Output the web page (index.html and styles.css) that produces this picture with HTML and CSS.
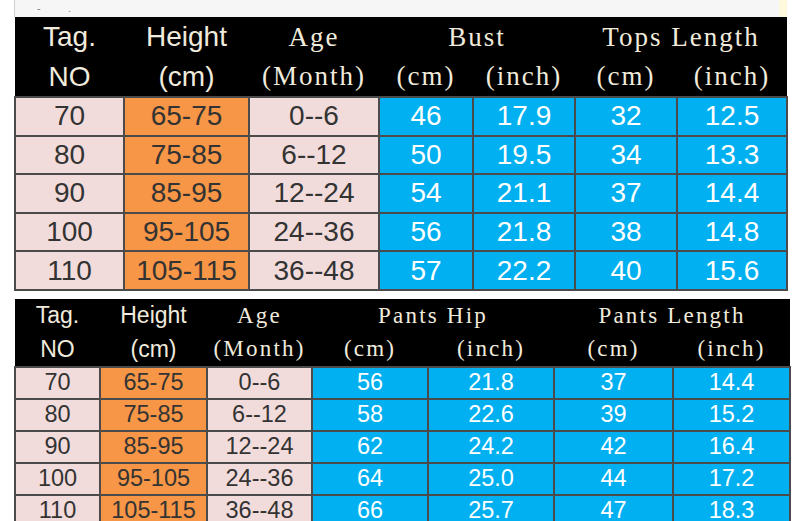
FILE: index.html
```html
<!DOCTYPE html>
<html>
<head>
<meta charset="utf-8">
<link rel="stylesheet" href="styles.css">
</head>
<body>
<div class="topbar">
  <div class="strip"><span class="mark">-&nbsp;&nbsp;&nbsp;&nbsp;&nbsp;.</span></div>
  <div class="yellow"></div>
</div>
<table class="chart chart-top">
  <colgroup>
    <col style="width:109px"><col style="width:125px"><col style="width:130px"><col style="width:94px"><col style="width:102px"><col style="width:102px"><col style="width:110px">
  </colgroup>
  <thead>
    <tr>
      <th class="sans">Tag.</th><th class="sans">Height</th><th class="serif">Age</th><th class="serif" colspan="2">Bust</th><th class="serif" colspan="2">Tops Length</th>
    </tr>
    <tr>
      <th class="sans">NO</th><th class="sans">(cm)</th><th class="serif">(Month)</th><th class="serif">(cm)</th><th class="serif">(inch)</th><th class="serif">(cm)</th><th class="serif">(inch)</th>
    </tr>
  </thead>
  <tbody>
    <tr><td class="pink">70</td><td class="orange">65-75</td><td class="pink">0--6</td><td class="blue">46</td><td class="blue">17.9</td><td class="blue">32</td><td class="blue">12.5</td></tr>
    <tr><td class="pink">80</td><td class="orange">75-85</td><td class="pink">6--12</td><td class="blue">50</td><td class="blue">19.5</td><td class="blue">34</td><td class="blue">13.3</td></tr>
    <tr><td class="pink">90</td><td class="orange">85-95</td><td class="pink">12--24</td><td class="blue">54</td><td class="blue">21.1</td><td class="blue">37</td><td class="blue">14.4</td></tr>
    <tr><td class="pink">100</td><td class="orange">95-105</td><td class="pink">24--36</td><td class="blue">56</td><td class="blue">21.8</td><td class="blue">38</td><td class="blue">14.8</td></tr>
    <tr><td class="pink">110</td><td class="orange">105-115</td><td class="pink">36--48</td><td class="blue">57</td><td class="blue">22.2</td><td class="blue">40</td><td class="blue">15.6</td></tr>
  </tbody>
</table>
<table class="chart chart-bottom">
  <colgroup>
    <col style="width:85px"><col style="width:107px"><col style="width:105px"><col style="width:116px"><col style="width:126px"><col style="width:119px"><col style="width:117px">
  </colgroup>
  <thead>
    <tr>
      <th class="sans">Tag.</th><th class="sans">Height</th><th class="serif">Age</th><th class="serif" colspan="2">Pants Hip</th><th class="serif" colspan="2">Pants Length</th>
    </tr>
    <tr>
      <th class="sans">NO</th><th class="sans">(cm)</th><th class="serif">(Month)</th><th class="serif">(cm)</th><th class="serif">(inch)</th><th class="serif">(cm)</th><th class="serif">(inch)</th>
    </tr>
  </thead>
  <tbody>
    <tr><td class="pink">70</td><td class="orange">65-75</td><td class="pink">0--6</td><td class="blue">56</td><td class="blue">21.8</td><td class="blue">37</td><td class="blue">14.4</td></tr>
    <tr><td class="pink">80</td><td class="orange">75-85</td><td class="pink">6--12</td><td class="blue">58</td><td class="blue">22.6</td><td class="blue">39</td><td class="blue">15.2</td></tr>
    <tr><td class="pink">90</td><td class="orange">85-95</td><td class="pink">12--24</td><td class="blue">62</td><td class="blue">24.2</td><td class="blue">42</td><td class="blue">16.4</td></tr>
    <tr><td class="pink">100</td><td class="orange">95-105</td><td class="pink">24--36</td><td class="blue">64</td><td class="blue">25.0</td><td class="blue">44</td><td class="blue">17.2</td></tr>
    <tr><td class="pink">110</td><td class="orange">105-115</td><td class="pink">36--48</td><td class="blue">66</td><td class="blue">25.7</td><td class="blue">47</td><td class="blue">18.3</td></tr>
  </tbody>
</table>
</body>
</html>
```
FILE: styles.css
```css
html, body {
  margin: 0;
  padding: 0;
  background: #ffffff;
  overflow: hidden;
}
body {
  width: 800px;
  height: 521px;
  font-family: "Liberation Sans", Arial, sans-serif;
}
.topbar {
  height: 17px;
  display: flex;
  padding-left: 14px;
}
.strip {
  flex: 1;
  border-left: 1px solid #cfcfcf;
  background: #f6f6f6;
  position: relative;
}
.mark {
  position: absolute;
  left: 22px;
  top: 2px;
  font-size: 11px;
  color: #7a8290;
  letter-spacing: 2px;
}
.yellow {
  width: 8px;
  margin-right: 13px;
  background: #fdf9dc;
}
.chart {
  border-collapse: collapse;
  table-layout: fixed;
  margin-left: 14px;
}
.chart-top {
  width: 772px;
}
.chart-bottom {
  width: 775px;
  margin-top: 8px;
}
.chart th {
  background: #000000;
  color: #f0ebdc;
  font-weight: normal;
  padding: 0;
  text-align: center;
  white-space: nowrap;
}
.chart td {
  padding: 0;
  text-align: center;
  border: 2px solid #4b4b4b;
  white-space: nowrap;
}
.chart-top th.sans { font-family: "Liberation Sans", Arial, sans-serif; font-size: 28px; }
.chart-top th.serif { font-family: "Liberation Serif", "Times New Roman", serif; font-size: 27px; letter-spacing: 2px; }
.chart-top thead tr:first-child th { height: 40px; }
.chart-top thead tr:last-child th { height: 39px; }
.chart-top td { height: 36.6px; font-size: 28px; }

.chart-bottom th.sans { font-family: "Liberation Sans", Arial, sans-serif; font-size: 23px; }
.chart-bottom th.serif { font-family: "Liberation Serif", "Times New Roman", serif; font-size: 23px; letter-spacing: 2.2px; }
.chart-bottom thead tr:first-child th { height: 34px; }
.chart-bottom thead tr:last-child th { height: 33px; }
.chart-bottom td { height: 30px; font-size: 23.5px; }

.pink { background: #f2dcdb; color: #333333; }
.orange { background: #f79646; color: #333333; }
.blue { background: #00b0f0; color: #ffffff; }
```
